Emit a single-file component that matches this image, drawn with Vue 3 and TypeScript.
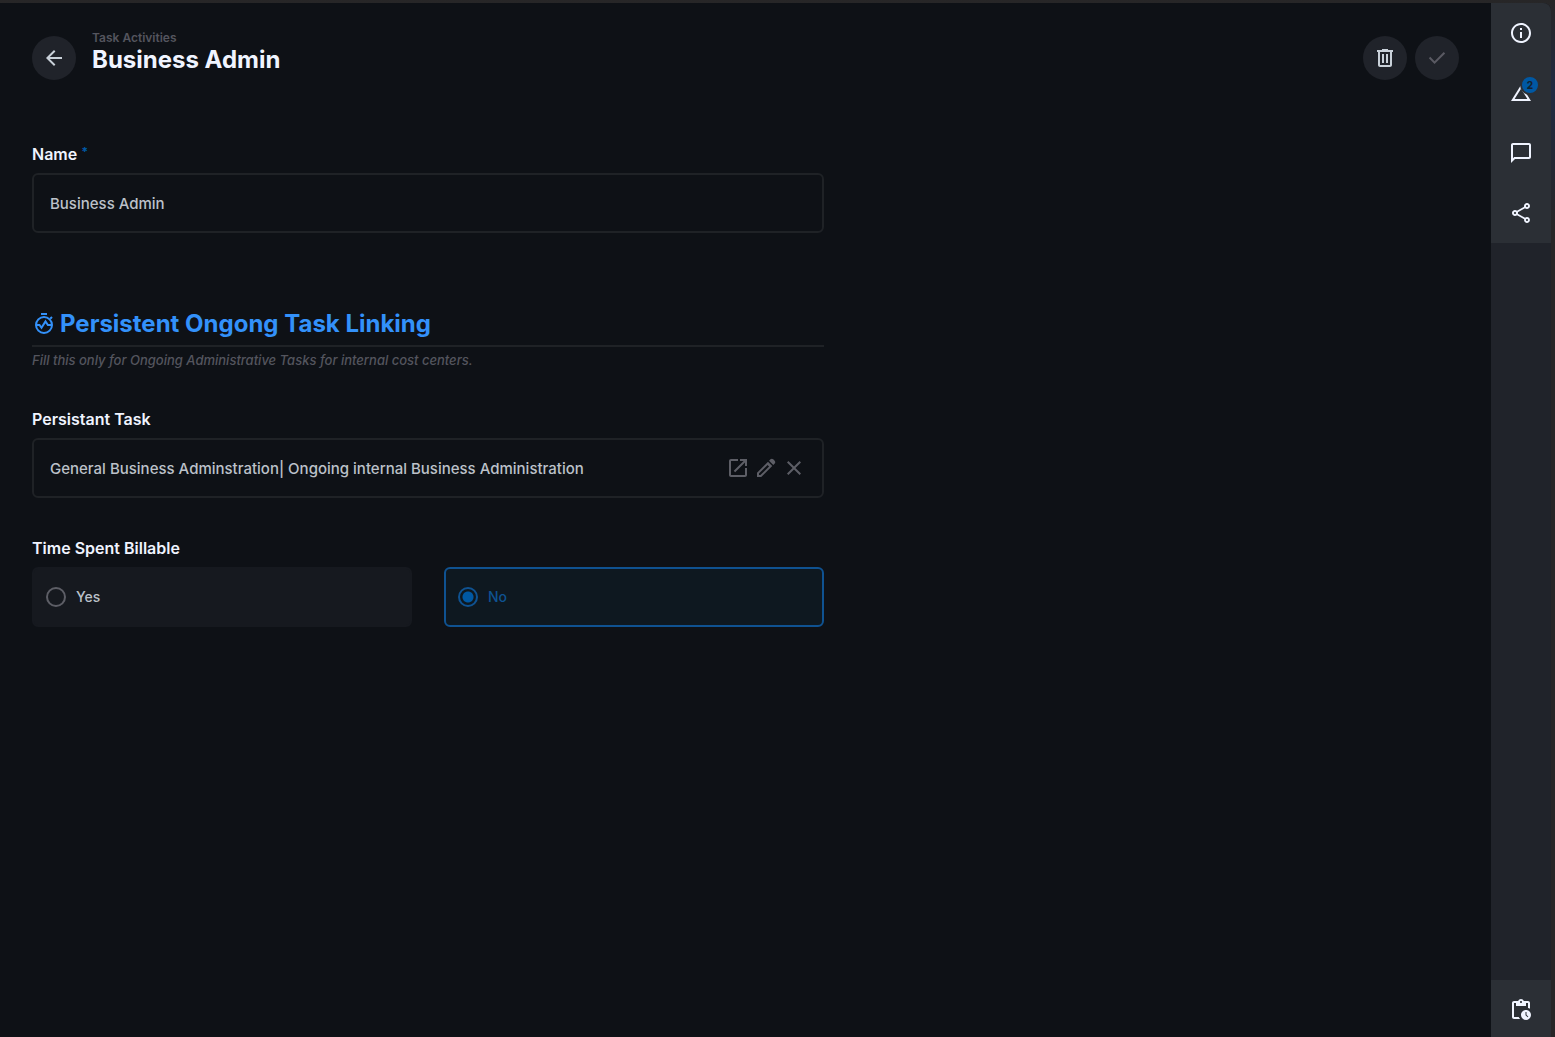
<script setup lang="ts">
import { ref } from 'vue'

const name = ref('Business Admin')
const task = ref('General Business Adminstration| Ongoing internal Business Administration')
const billable = ref('no')
const choices = [
  { value: 'yes', text: 'Yes' },
  { value: 'no', text: 'No' },
]

const fieldActions = [
  {
    label: 'Open item',
    path: 'M19 19H5V5h7V3H5c-1.1 0-2 .9-2 2v14c0 1.1.9 2 2 2h14c1.1 0 2-.9 2-2v-7h-2v7zM14 3v2h3.59l-9.83 9.83 1.41 1.41L19 6.41V10h2V3h-7z',
  },
  {
    label: 'Edit item',
    path: 'M5 19h1.4l8.65-8.6-1.45-1.45L5 17.6V19zM3 21v-4.25L14 5.8l4.25 4.25L7.25 21H3zM19.3 8.95l-4.25-4.2 1.4-1.4c.4-.4.9-.6 1.4-.6s1 .2 1.4.6l1.4 1.4c.4.4.6.85.6 1.4 0 .5-.2 1-.55 1.4z',
  },
  {
    label: 'Deselect item',
    path: 'M19 6.41L17.59 5 12 10.59 6.41 5 5 6.41 10.59 12 5 17.59 6.41 19 12 13.41 17.59 19 19 17.59 13.41 12z',
  },
]

const sideItems = [
  {
    label: 'Information',
    path: 'M11 7h2v2h-2zm0 4h2v6h-2zm1-9C6.48 2 2 6.48 2 12s4.48 10 10 10 10-4.48 10-10S17.52 2 12 2zm0 18c-4.41 0-8-3.59-8-8s3.59-8 8-8 8 3.59 8 8-3.59 8-8 8z',
  },
  { label: 'Revisions', path: 'M12 7.77L18.39 18H5.61L12 7.77M12 4L2 20h20L12 4z', count: 2 },
  {
    label: 'Comments',
    path: 'M20 2H4c-1.1 0-2 .9-2 2v18l4-4h14c1.1 0 2-.9 2-2V4c0-1.1-.9-2-2-2zm0 14H5.17L4 17.17V4h16v12z',
  },
  {
    label: 'Shares',
    path: 'M18 16.08c-.76 0-1.44.3-1.96.77L8.91 12.7c.05-.23.09-.46.09-.7s-.04-.47-.09-.7l7.05-4.11c.54.5 1.25.81 2.04.81 1.66 0 3-1.34 3-3s-1.34-3-3-3-3 1.34-3 3c0 .24.04.47.09.7L8.04 9.81C7.5 9.31 6.79 9 6 9c-1.66 0-3 1.34-3 3s1.34 3 3 3c.79 0 1.5-.31 2.04-.81l7.12 4.16c-.05.21-.08.43-.08.65 0 1.61 1.31 2.92 2.92 2.92s2.92-1.31 2.92-2.92-1.31-2.92-2.92-2.92zM18 4c.55 0 1 .45 1 1s-.45 1-1 1-1-.45-1-1 .45-1 1-1zM6 13c-.55 0-1-.45-1-1s.45-1 1-1 1 .45 1 1-.45 1-1 1zm12 7.02c-.55 0-1-.45-1-1s.45-1 1-1 1 .45 1 1-.45 1-1 1z',
  },
]
</script>

<template>
  <div class="window">
    <div class="shell">
      <main class="content">
        <header class="header">
          <button class="round" type="button" aria-label="Back">
            <svg viewBox="0 0 24 24"><path d="M20 11H7.83l5.59-5.59L12 4l-8 8 8 8 1.41-1.41L7.83 13H20v-2z" /></svg>
          </button>
          <div class="titles">
            <a class="crumb" href="#">Task Activities</a>
            <h1>Business Admin</h1>
          </div>
          <div class="actions">
            <button class="round" type="button" aria-label="Delete">
              <svg viewBox="0 0 24 24"><path d="M7 21c-1.1 0-2-.9-2-2V6H4V4h5V3h6v1h5v2h-1v13c0 1.1-.9 2-2 2H7zM17 6H7v13h10V6zM9 17h2V8H9v9zm4 0h2V8h-2v9z" /></svg>
            </button>
            <button class="round" type="button" aria-label="Save" disabled>
              <svg viewBox="0 0 24 24"><path d="M9.55 18l-5.7-5.7 1.43-1.43 4.27 4.28 9.17-9.18 1.43 1.43z" /></svg>
            </button>
          </div>
        </header>

        <form class="form" @submit.prevent>
          <div class="field">
            <label class="label" for="name">Name <span class="required">*</span></label>
            <div class="box"><input id="name" v-model="name" type="text" /></div>
          </div>

          <section class="divider">
            <h2>
              <svg viewBox="0 0 24 24" class="stroke">
                <path d="M9 2h6M18.2 6.8l1.8-1.8" />
                <circle cx="12" cy="13" r="8" />
                <path d="M4 13h3.5l2 2.8 4-6.4 2.4 3.6H20" />
              </svg>
              Persistent Ongong Task Linking
            </h2>
            <p>Fill this only for Ongoing Administrative Tasks for internal cost centers.</p>
          </section>

          <div class="field">
            <label class="label" for="task">Persistant Task</label>
            <div class="box">
              <input id="task" v-model="task" type="text" readonly />
              <button v-for="a in fieldActions" :key="a.label" type="button" :aria-label="a.label">
                <svg viewBox="0 0 24 24"><path :d="a.path" /></svg>
              </button>
            </div>
          </div>

          <fieldset class="field">
            <legend class="label">Time Spent Billable</legend>
            <div class="choices">
              <label v-for="c in choices" :key="c.value" class="choice" :class="{ picked: billable === c.value }">
                <input v-model="billable" type="radio" name="billable" :value="c.value" />
                {{ c.text }}
              </label>
            </div>
          </fieldset>
        </form>
      </main>

      <aside class="sidebar">
        <button v-for="s in sideItems" :key="s.label" type="button" :aria-label="s.label">
          <svg viewBox="0 0 24 24"><path :d="s.path" /></svg>
          <span v-if="s.count" class="badge">{{ s.count }}</span>
        </button>
        <button type="button" class="last" aria-label="Notifications">
          <svg viewBox="0 0 24 24"><path d="M17 12c-2.76 0-5 2.24-5 5s2.24 5 5 5 5-2.24 5-5-2.24-5-5-5zm1.65 7.35L16.5 17.2V14h1v2.79l1.85 1.85-.7.71zM19 3h-4.18C14.4 1.84 13.3 1 12 1s-2.4.84-2.82 2H5c-1.1 0-2 .9-2 2v14c0 1.1.9 2 2 2h6.11a6.74 6.74 0 0 1-1.42-2H5V5h2v3h10V5h2v5.08c.71.1 1.38.31 2 .6V5c0-1.1-.9-2-2-2zm-7 2c-.55 0-1-.45-1-1s.45-1 1-1 1 .45 1 1-.45 1-1 1z" /></svg>
        </button>
      </aside>
    </div>
  </div>
</template>

<style>
body {
  margin: 0;
  background: #0e1116;
}
</style>

<style scoped>
* {
  box-sizing: border-box;
}
.window {
  display: flex;
  min-height: 100vh;
  padding: 3px 4px 0 0;
  background: linear-gradient(#272627 0, #252832 40px, #202b43 90px, #272627 230px);
  font-family: Inter, sans-serif;
  font-size: 15px;
  line-height: 24px;
  font-weight: 500;
  color: #bcc1c9;
}
.shell {
  display: flex;
  flex: 1;
  overflow: hidden;
  border-radius: 0 8px 0 0;
  background: #0e1116;
}
.content {
  flex: 1;
  min-width: 0;
  padding: 0 32px;
}
svg {
  display: block;
  width: 24px;
  height: 24px;
  fill: currentColor;
}
button {
  padding: 0;
  border: 0;
  background: none;
  color: inherit;
  font: inherit;
  cursor: pointer;
}
h1,
h2,
p {
  margin: 0;
}
.header {
  display: flex;
  align-items: center;
  gap: 16px;
  padding: 27px 0 16px;
}
.round {
  display: grid;
  place-items: center;
  width: 44px;
  height: 44px;
  border-radius: 50%;
  background: #20232a;
  color: #c9d1d9;
}
.round:disabled {
  color: #5a5a63;
}
.titles {
  flex: 1;
  padding-bottom: 12px;
}
.crumb {
  display: block;
  font-size: 12px;
  line-height: 16px;
  font-weight: 600;
  color: #54555e;
  text-decoration: none;
}
h1 {
  font-size: 24px;
  line-height: 28px;
  font-weight: 700;
  color: #f0f4ff;
}
.actions {
  display: flex;
  gap: 8px;
}
.form {
  display: flex;
  flex-direction: column;
  gap: 40px;
  max-width: 792px;
  padding-top: 42px;
}
.field {
  min-width: 0;
  margin: 0;
  padding: 0;
  border: 0;
}
.label {
  display: block;
  margin-bottom: 8px;
  padding: 0;
  font-size: 16px;
  line-height: 21px;
  font-weight: 600;
  color: #f0f4ff;
}
.required {
  vertical-align: 4px;
  font-size: 12px;
  line-height: 1;
  font-weight: 800;
  color: #0058a3;
}
.box {
  display: flex;
  align-items: center;
  gap: 4px;
  height: 60px;
  padding: 0 16px;
  border: 2px solid #1f2226;
  border-radius: 6px;
}
.box input {
  flex: 1;
  min-width: 0;
  height: 100%;
  padding: 0;
  border: 0;
  outline: 0;
  background: none;
  color: inherit;
  font: inherit;
}
.box button {
  color: #5d5e66;
}
.divider {
  padding-top: 34px;
}
h2 {
  display: flex;
  align-items: center;
  gap: 4px;
  padding-bottom: 4px;
  border-bottom: 2px solid #1f2226;
  font-size: 24px;
  line-height: 34px;
  font-weight: 700;
  color: #3391fa;
}
.stroke {
  fill: none;
  stroke: currentColor;
  stroke-width: 2;
}
.divider p {
  padding-top: 4px;
  font-size: 13px;
  line-height: 18px;
  font-style: italic;
  color: #54555e;
}
.choices {
  display: grid;
  grid-template-columns: 1fr 1fr;
  gap: 32px;
}
.choice {
  display: flex;
  align-items: center;
  gap: 10px;
  height: 60px;
  padding: 0 12px;
  border: 2px solid #16191f;
  border-radius: 6px;
  background: #16191f;
  font-size: 14px;
}
.choice.picked {
  border-color: #0f5291;
  background: #0e1820;
  color: #0f5291;
}
.choice input {
  appearance: none;
  width: 20px;
  height: 20px;
  margin: 0;
  border: 2px solid #5d5e66;
  border-radius: 50%;
}
.choice input:checked {
  border-color: #0f5291;
  background: radial-gradient(circle, #0058a3 5px, transparent 6px);
}
.sidebar {
  display: flex;
  flex-direction: column;
  width: 60px;
  background: #20232a;
  color: #f0f4ff;
}
.sidebar button {
  position: relative;
  display: grid;
  place-items: center;
  height: 60px;
  background: #2b2f35;
}
.sidebar .last {
  height: 57px;
  margin-top: auto;
  padding-top: 3px;
}
.badge {
  position: absolute;
  top: 12px;
  right: 11px;
  width: 20px;
  height: 20px;
  border: 2px solid #2b2f35;
  border-radius: 50%;
  background: #0058a3;
  color: #14222f;
  font-size: 10px;
  line-height: 16px;
  font-weight: 800;
}
</style>
